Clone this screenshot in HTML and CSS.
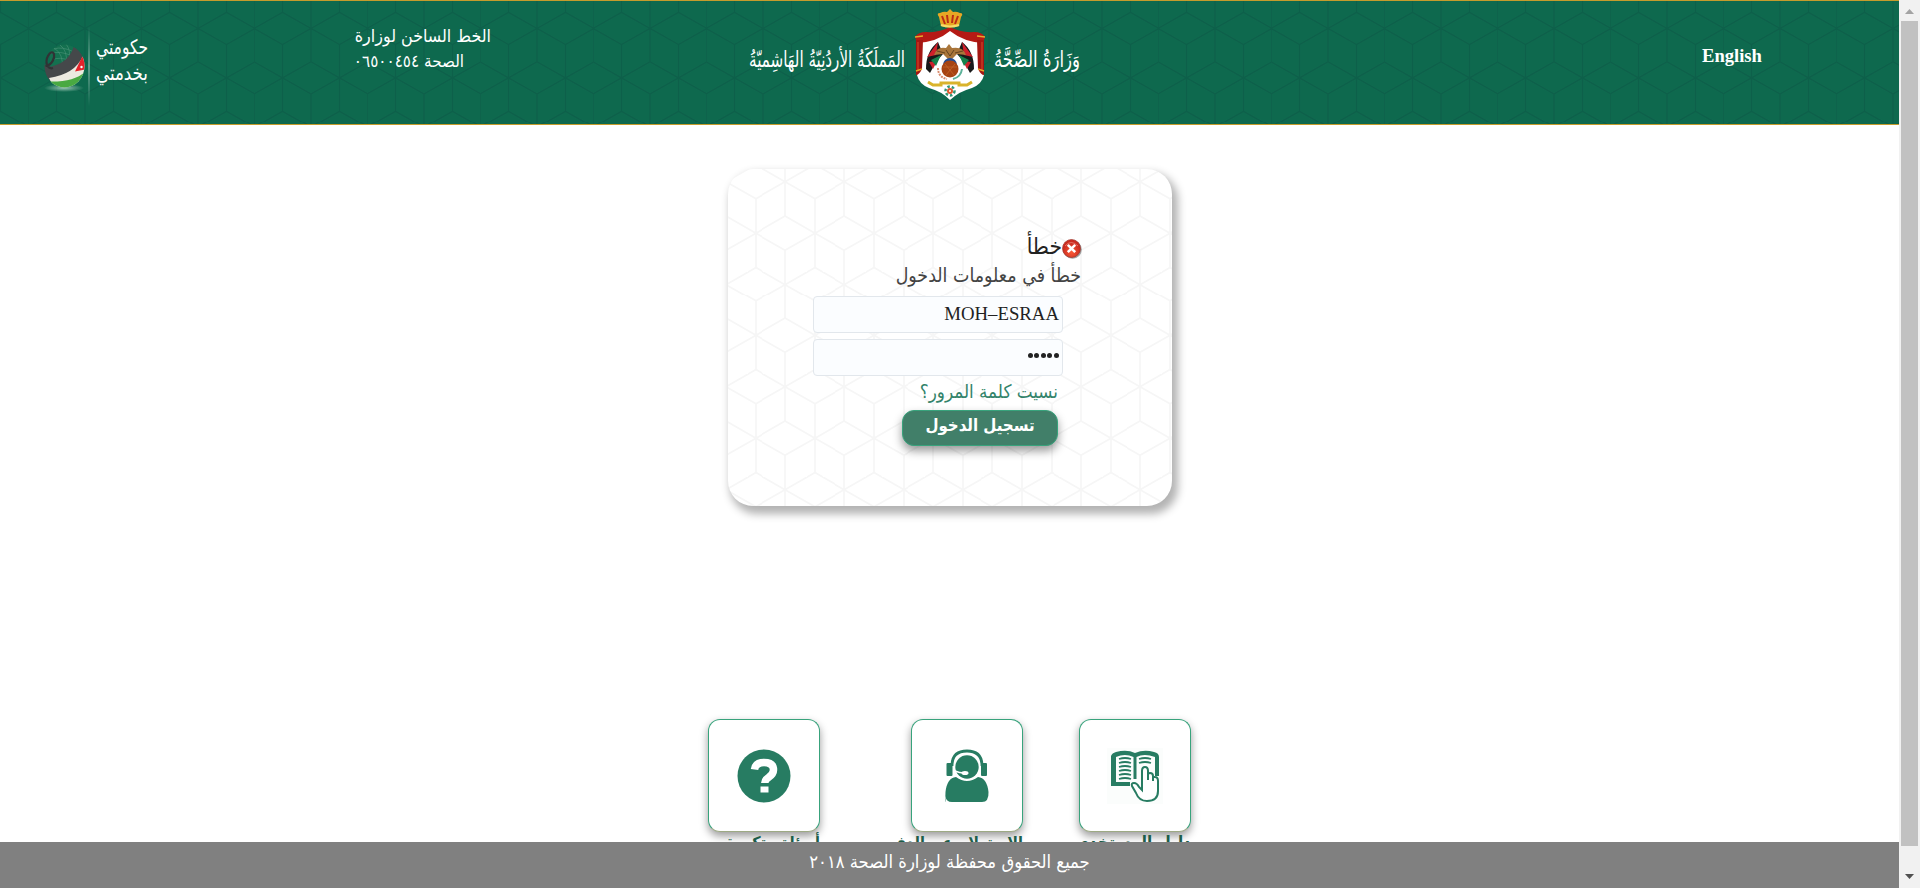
FILE: index.html
```html
<!DOCTYPE html>
<html lang="ar">
<head>
<meta charset="utf-8">
<title>وزارة الصحة</title>
<link rel="stylesheet" href="styles.css">
</head>
<body>
<div class="page">
  <header class="header">
    <svg class="gov-logo" width="120" height="100" viewBox="40 15 120 100">
      <defs>
        <linearGradient id="fade" x1="0" y1="0" x2="0" y2="1"><stop offset="0" stop-color="#fff" stop-opacity="0"/><stop offset=".5" stop-color="#fff" stop-opacity=".7"/><stop offset="1" stop-color="#fff" stop-opacity="0"/></linearGradient>
        <radialGradient id="glow"><stop offset="0" stop-color="#b8d8c8" stop-opacity=".8"/><stop offset="1" stop-color="#b8d8c8" stop-opacity="0"/></radialGradient>
        <clipPath id="ball"><ellipse cx="64.500" cy="66" rx="20" ry="21.500"/></clipPath>
      </defs>
      <ellipse cx="64" cy="88" rx="20" ry="4" fill="url(#glow)"/>
      <g clip-path="url(#ball)">
        <path d="M50 44h35v30H50z" fill="#14704f"/>
        <path d="M54 48q10 6 8 20M60 45q8 6 6 18M66 44q5 6 3 16M50 54q10-4 22 2M52 60q8-4 18 1M54 49q8-3 20 3" fill="none" stroke="#4c9379" stroke-width=".6"/>
        <path d="M74 46Q69 62 53 66Q46 68 43 62L46 80L62 84L84 62V46z" fill="#45484a"/>
        <path d="M83 56Q75 74 49 78L56 92H90V56z" fill="#eceae0"/>
        <path d="M87 70Q76 82 50 81.500L56 92H90z" fill="#49a942"/>
        <path d="M82 57L75 71.500L85 69.500V58z" fill="#e5232b"/>
      </g>
      <circle cx="81.500" cy="67" r="1.200" fill="#fff"/>
      <path d="M45.500 66C52 65 55 58 54 54C52 49 46 56 46.500 63C47 67 50 69 53 68" fill="none" stroke="#303335" stroke-width="2.200"/>
      <path d="M88.500 26h1v80h-1z" fill="url(#fade)"/>
      <text class="logo-text" x="96" y="54" direction="ltr" textLength="52" lengthAdjust="spacingAndGlyphs">حكومتي</text>
      <text class="logo-text" x="96" y="80" direction="ltr" textLength="52" lengthAdjust="spacingAndGlyphs">بخدمتي</text>
    </svg>
    <div class="hotline" dir="rtl"><span>الخط الساخن لوزارة</span><span class="number">الصحة ٠٦٥٠٠٤٥٤</span></div>
    <svg class="brand" width="350" height="110" viewBox="740 0 350 110">
      <text class="calligraphy" x="749" y="67" textLength="156" lengthAdjust="spacingAndGlyphs">المَملَكَةُ الأردُنِيّةُ الهَاشِميّةُ</text>
      <text class="calligraphy" x="994" y="67" textLength="86" lengthAdjust="spacingAndGlyphs">وَزَارَةُ الصِّحَّةُ</text>
      <path d="M950 28Q935 38 919 34L917 75Q919 84 929 88Q941 91 950 100Q960 91 972 88Q982 84 984 75L981 34Q965 38 950 28z" fill="#fff"/>
      <path d="M950 27Q939 33 926 32Q918 32 915 37L917 43Q937 42 950 31Q964 42 983 43L985 37Q982 32 974 32Q961 33 950 27z" fill="#b51a15"/>
      <path d="M916 40h7L922 69q-3 6-6 6zM984 40h-7L978 69q3 6 6 6z" fill="#a41612"/>
      <path d="M918 42v29M982 42v29" stroke="#d84a2b" stroke-width="1"/>
      <path d="M923 36L915 37M977 36l8 1M916 71l6-2M984 71l-6-2" stroke="#e6a92c" stroke-width="1.500"/>
      <path d="M939 17Q936 13 940 13Q944 11 947 12L950 9L953 12Q956 11 960 13Q964 13 961 17L959 26Q950 29 941 26z" fill="#e7a724"/>
      <path d="M942 16l3 8M947 15l1 8M953 15l-1 8M958 16l-3 8" stroke="#bc2c16" stroke-width="2"/>
      <path d="M941 25Q950 28 959 25" fill="none" stroke="#f8dc69" stroke-width="2"/>
      <path d="M938 42Q926 51 926 69L930 73L936 62L943 54zM962 42Q974 51 974 69L970 73L964 62L957 54z" fill="#191919"/>
      <path d="M938 42L927 57L936 55zM962 42L973 57L964 55zM929 62L933 69L937 61zM971 62L967 69L963 61z" fill="#ce202b"/>
      <path d="M931 60L941 55L936 66zM969 60L959 55L964 66z" fill="#16814c"/>
      <path d="M934 55Q937 46 946 48L949 44L952 48Q963 46 966 55L957 54L952 59H948L943 54z" fill="#a9753a"/>
      <path d="M937 51l8 2M963 51l-8 2M946 50l4 6 4-6" stroke="#63421f" stroke-width="1" fill="none"/>
      <circle cx="950" cy="65" r="7" fill="#244d92"/><circle cx="950" cy="69" r="8.500" fill="#a74413"/>
      <path d="M943 67h14M945 64l9 11M955 64l-9 11" stroke="#c7682b" stroke-width=".7"/>
      <path d="M938 68q0 9 9 11" fill="none" stroke="#d98b6e" stroke-width="2" stroke-dasharray="2 1"/>
      <path d="M962 69q-1 8-9 10" fill="none" stroke="#5cb299" stroke-width="2"/>
      <path d="M928 82l5 3h8v-2h18v2h8l5-3" fill="none" stroke="#d9b32b" stroke-width="3"/>
      <circle cx="950" cy="91" r="4.500" fill="none" stroke="#329775" stroke-width="2.500" stroke-dasharray="2.500 2"/><circle cx="950" cy="91" r="3" fill="#df5a2e"/><circle cx="950" cy="91" r="1" fill="#fff"/>
    </svg>
    <a class="language">English</a>
  </header>
  <main class="main">
    <form class="card" dir="rtl">
      <div class="error-head">
        <svg width="20" height="20" viewBox="0 0 20 20"><defs><radialGradient id="err" cx=".5" cy=".7"><stop offset="0" stop-color="#fa5a36"/><stop offset="1" stop-color="#cb2c20"/></radialGradient></defs><circle cx="10.500" cy="10.500" r="9.300" fill="#555" opacity=".55"/><circle cx="9.500" cy="9.500" r="9" fill="url(#err)" stroke="#9c342b" stroke-width=".7"/><path d="M3 7Q9 0 16 7" stroke="#f3a193" fill="none" opacity=".6"/><path d="M5.800 5.800l7.400 7.400M13.200 5.800l-7.400 7.400" stroke="#fff" stroke-width="2.600"/></svg><span>خطأ</span>
      </div>
      <div class="error-text">خطأ في معلومات الدخول</div>
      <div class="field">MOH–ESRAA</div>
      <div class="field dots"><i></i><i></i><i></i><i></i><i></i></div>
      <a class="forgot">نسيت كلمة المرور؟</a>
      <div class="submit">تسجيل الدخول</div>
    </form>
    <nav class="tiles">
      <div class="tile-item">
        <div class="tile"><svg width="54" height="54" viewBox="0 0 54 54"><circle cx="27" cy="27" r="26.500" fill="#277c62"/><path d="M17.500 20.500Q18.500 13.500 27 13.500Q36.500 13.500 36.500 21Q36.500 25 31.500 28.500Q27.800 31 27.800 34" fill="none" stroke="#fff" stroke-width="7.500"/><path d="M23.500 37.500h8v6h-8z" fill="#fff"/></svg></div>
        <span class="label" dir="rtl">أسئلة متكررة</span>
      </div>
      <div class="tile-item second">
        <div class="tile"><svg width="54" height="54" viewBox="0 0 54 54"><g fill="#277c62"><path d="M6 53Q5 53 5.500 43Q7 29 16 28Q27 36 38 28Q47 29 48.500 43Q49 53 42 53H12Q6 53 5.500 47z"/><circle cx="27" cy="18" r="11.700"/><rect x="6.500" y="14" width="6" height="13" rx="1"/><rect x="41" y="14" width="6" height="13" rx="1"/></g><path d="M12 17Q12 2 27 2Q42 2 42 17" fill="none" stroke="#277c62" stroke-width="2.800"/><path d="M15 22Q19 24 25 24" fill="none" stroke="#fff" stroke-width="1.500"/><ellipse cx="25" cy="24" rx="3.500" ry="2" fill="#fff"/></svg></div>
        <span class="label" dir="rtl">الاستعلام عن الدفع</span>
      </div>
      <div class="tile-item third">
        <div class="tile"><svg width="56" height="56" viewBox="0 0 56 56"><path fill="#fbfdfc" d="M0 0h56v56H0z"/><path d="M4 8Q5 5 9 4Q20 1 28 5Q37 1 47 4Q52 5 52 9V28H48V9Q37 5 29.500 9V31H26.500V9Q18 5 9 9V34H23V38H4z" fill="#277c62"/><path d="M12 11q6-2 12 0M12 15q6-2 12 0M12 19q6-2 12 0M12 23q6-2 12 0M12 27q6-2 12 0M12 31q6-2 12 0M32 11q6-2 12 0M32 15q6-2 12 0" fill="none" stroke="#277c62" stroke-width="1.800"/><path d="M35 38V23Q35 19 38 19Q41 19 41 23V32V27Q41 25 43 25Q46 25 46 28V33V30Q46 28 48 29Q51 29 51 33V43Q51 53 40 53Q32 53 29 45L25 38Q24 35 27 35Q30 35 32 39L35 42z" fill="#fff" stroke="#277c62" stroke-width="2"/></svg></div>
        <span class="label guide" dir="rtl">دليل المستخدم</span>
      </div>
    </nav>
  </main>
  <footer class="footer" dir="rtl">جميع الحقوق محفظة لوزارة الصحة ٢٠١٨</footer>
</div>
<div class="scrollbar"><i class="arrow up"></i><i class="thumb"></i><i class="arrow down"></i></div>
</body>
</html>
```
FILE: styles.css
```css
* { box-sizing: border-box; }
body { margin: 0; width: 1920px; height: 888px; display: flex; overflow: hidden; background: #fff; font-family: "DejaVu Sans Condensed", "DejaVu Sans", sans-serif; }
.page { position: relative; width: 1899px; height: 888px; overflow: hidden; }
.header {
  height: 125px; display: flex; align-items: flex-start; border-top: 1px solid #c69c2c; border-bottom: 1px solid #c69c2c;
  background: #0e694e url("data:image/svg+xml,%3Csvg xmlns='http://www.w3.org/2000/svg' width='56.5' height='98.6' viewBox='0 0 56.5 98.6'%3E%3Cpath d='M0 27.3L28.25 11.3L56.5 27.3L28.25 43.3zM0 27.3V60.6L28.25 76.6L56.5 60.6V27.3M28.25 43.3V76.6M28.25 76.6L0 92.6V98.6M28.25 76.6L56.5 92.6V98.6M0 0V27.3M56.5 0V27.3M28.25 0V11.3M28.25 76.6V98.6' fill='none' stroke='%230d604a' stroke-width='1.300'/%3E%3C/svg%3E");
  background-position: -28px 0;
}
.gov-logo { margin: 14px 0 0 40px; flex: none; overflow: visible; }
.logo-text { font-size: 20px; fill: #fff; }
.hotline { width: 190px; margin: 23px 0 0 141px; display: flex; flex-direction: column; color: #fff; font-size: 17.700px; line-height: 25px; white-space: nowrap; }
.hotline .number { padding-right: 27px; font-size: 16.900px; }
.brand { margin: -1px 0 0 249px; flex: none; overflow: visible; }
.calligraphy { font-size: 22px; fill: #fff; font-family: "DejaVu Sans", sans-serif; }
.language { margin: 44px 0 0 612px; color: #fff; font: bold 18.600px/22px "Liberation Serif", serif; }
.main { display: flex; flex-direction: column; padding-top: 44px; }
.card {
  width: 444px; height: 337px; margin-left: 728px; padding: 67px 91px 0 85px; border-radius: 25px;
  display: flex; flex-direction: column;
  box-shadow: 4px 6px 9px 2px rgba(0,0,0,.3);
  background: #fff url("data:image/svg+xml,%3Csvg xmlns='http://www.w3.org/2000/svg' width='59.2' height='102.6' viewBox='0 0 59.2 102.6'%3E%3Cpath d='M0 12.6L29.6 -4.4L59.2 12.6L29.6 29.6zM0 12.6V46.9L29.6 63.9L59.2 46.9V12.6M29.6 29.6V98.2M0 12.6V0M59.2 12.6V0M29.6 63.9L0 80.9V102.6M29.6 63.9L59.2 80.9V102.6M29.6 98.2L22 102.6M29.6 98.2L37.2 102.6' fill='none' stroke='%23f6f6f6' stroke-width='1.700'/%3E%3C/svg%3E");
  background-position: -2px 0;
}
.error-head { display: flex; height: 28px; font-size: 22.500px; line-height: 20px; color: #222; }
.error-head svg { margin: 3px -1px 0 0; }
.error-text { height: 32px; line-height: 24px; font-size: 19.400px; color: #444; white-space: nowrap; }
.field { width: 250px; height: 37px; margin: 0 18px 6px 0; padding: 0 3px; border: 1px solid #e2e7ec; border-radius: 4px; background: #fbfdff; color: #222; font: 18.800px/33px "Liberation Serif", serif; text-align: right; }
.dots { display: flex; gap: 1.600px; padding-top: 13px; }
.dots i { width: 5px; height: 5px; border-radius: 50%; background: #222; }
.forgot { height: 28px; margin-right: 23px; color: #33836a; font-size: 18.700px; line-height: 20px; white-space: nowrap; }
.submit { width: 156px; height: 36px; margin-right: 23px; border: 1px solid #38a37c; border-radius: 12px; background: #417f69; box-shadow: 0 5px 10px rgba(0,0,0,.4); color: #fff; font-size: 16.700px; font-weight: bold; line-height: 29px; text-align: center; white-space: nowrap; }
.tiles { display: flex; margin: 213px 0 0 708px; }
.tile-item { width: 112px; display: flex; flex-direction: column; align-items: flex-end; }
.second { margin-left: 91px; }
.third { margin-left: 56px; }
.tile { width: 112px; height: 113px; display: flex; align-items: center; justify-content: center; border: 1px solid #38a37c; border-bottom-color: #9daa84; border-radius: 12px; background: #fff; box-shadow: 0 4px 9px rgba(0,0,0,.4); }
.label { color: #1d5e4a; font-size: 16px; font-weight: bold; line-height: 21px; white-space: nowrap; }
.guide { font-size: 17px; }
.footer { position: absolute; left: 0; bottom: 0; width: 100%; height: 46px; background: #808080; color: #fff; font-size: 18.300px; line-height: 40px; text-align: center; }
.scrollbar { width: 21px; height: 888px; background: #f1f1f1; display: flex; flex-direction: column; align-items: center; }
.arrow { width: 9px; height: 5px; }
.up { margin: 9px 0 7px; background: #a3a3a3; clip-path: polygon(50% 0, 100% 100%, 0 100%); }
.down { margin-top: 28px; background: #505050; clip-path: polygon(0 0, 100% 0, 50% 100%); }
.thumb { width: 17px; height: 825px; background: #c1c1c1; }
```
